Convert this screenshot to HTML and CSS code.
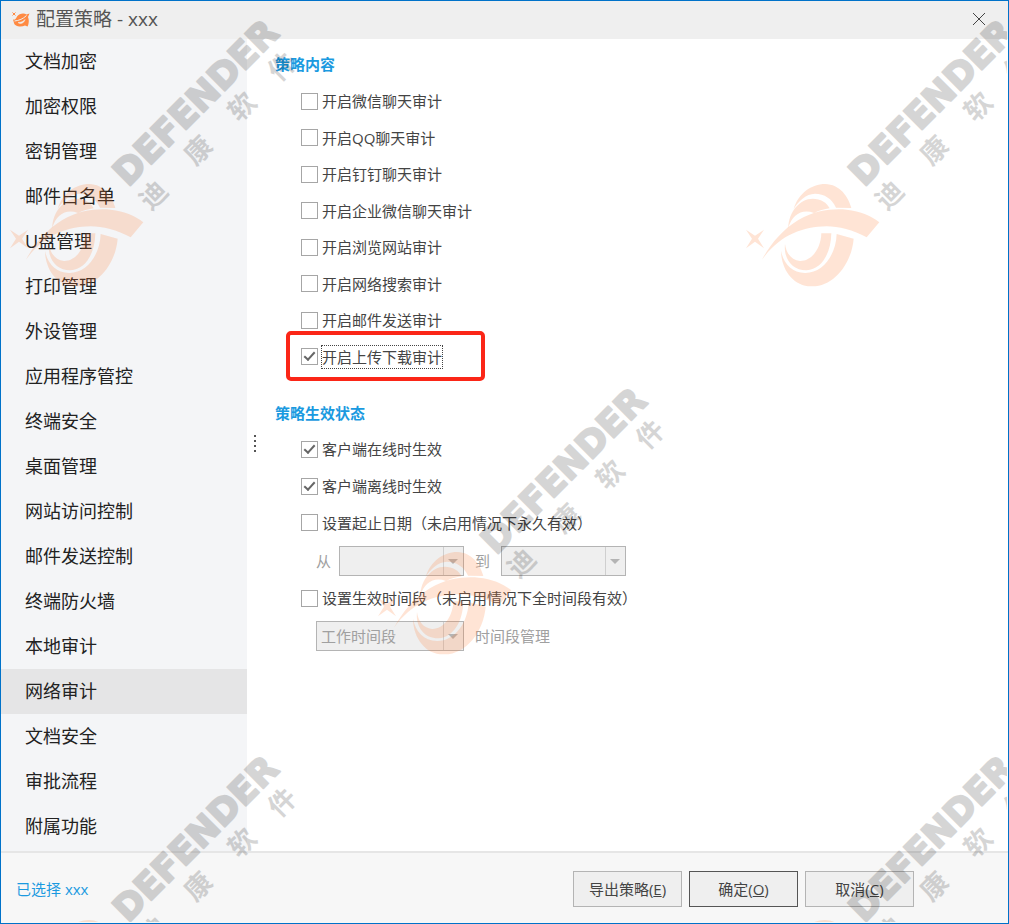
FILE: index.html
```html
<!DOCTYPE html>
<html lang="zh-CN">
<head>
	<meta charset="UTF-8">
	<meta name="viewport" content="width=device-width, initial-scale=1">
	<title>配置策略 - xxx</title>
	<link rel="stylesheet" href="styles.css">
</head>
<body>
<div class="window">
	<header class="titlebar">
		<svg class="app-icon" viewBox="0 0 18 15" aria-hidden="true">
			<path d="M0.500 0.500l3 3M3.500 0.500l-3 3" stroke="#ff8a42" stroke-width="1"/>
			<path d="M5 4.500C7 1.500 12 0.500 14.500 2.500L17.500 1.500L16 5C17.800 9 16 14 15.500 14.500L13 13.500C9 15.500 2.500 14.500 2 11L1 7.500C3 8 4 7 5 4.500Z" fill="#ff8a42"/>
			<path d="M2.500 9C7 8.500 11 7 14.500 3.500" fill="none" stroke="#efefef" stroke-width="1"/>
			<path d="M6 10.500C8 12.500 12 11.500 13 7.500C11.500 9.500 9 10.500 6 10.500Z" fill="#efefef" stroke="#efefef" stroke-width="0.500"/>
		</svg>
		<h1 class="title">配置策略 - xxx</h1>
		<button class="close" type="button" aria-label="关闭">
			<svg viewBox="0 0 14 14"><path d="M1 1l12 12M13 1L1 13"/></svg>
		</button>
	</header>

	<div class="body">
		<nav class="sidebar">
			<a href="#">文档加密</a>
			<a href="#">加密权限</a>
			<a href="#">密钥管理</a>
			<a href="#">邮件白名单</a>
			<a href="#">U盘管理</a>
			<a href="#">打印管理</a>
			<a href="#">外设管理</a>
			<a href="#">应用程序管控</a>
			<a href="#">终端安全</a>
			<a href="#">桌面管理</a>
			<a href="#">网站访问控制</a>
			<a href="#">邮件发送控制</a>
			<a href="#">终端防火墙</a>
			<a href="#">本地审计</a>
			<a href="#" class="active">网络审计</a>
			<a href="#">文档安全</a>
			<a href="#">审批流程</a>
			<a href="#">附属功能</a>
		</nav>
		<div class="splitter"><i></i><i></i><i></i><i></i></div>

		<main class="content">
			<h2>策略内容</h2>
			<ul class="checks audit">
				<li><label><input type="checkbox"><span>开启微信聊天审计</span></label></li>
				<li><label><input type="checkbox"><span>开启QQ聊天审计</span></label></li>
				<li><label><input type="checkbox"><span>开启钉钉聊天审计</span></label></li>
				<li><label><input type="checkbox"><span>开启企业微信聊天审计</span></label></li>
				<li><label><input type="checkbox"><span>开启浏览网站审计</span></label></li>
				<li><label><input type="checkbox"><span>开启网络搜索审计</span></label></li>
				<li><label><input type="checkbox"><span>开启邮件发送审计</span></label></li>
				<li class="marked"><label><input type="checkbox" checked><span>开启上传下载审计</span></label></li>
			</ul>

			<h2>策略生效状态</h2>
			<ul class="checks state">
				<li><label><input type="checkbox" checked><span>客户端在线时生效</span></label></li>
				<li><label><input type="checkbox" checked><span>客户端离线时生效</span></label></li>
				<li><label><input type="checkbox"><span>设置起止日期（未启用情况下永久有效）</span></label></li>
			</ul>
			<div class="range">
				<label for="from">从</label>
				<div class="combo"><select id="from" disabled><option></option></select></div>
				<label class="to" for="to">到</label>
				<div class="combo"><select id="to" disabled><option></option></select></div>
			</div>
			<ul class="checks">
				<li><label><input type="checkbox"><span>设置生效时间段（未启用情况下全时间段有效）</span></label></li>
			</ul>
			<div class="range">
				<div class="combo wide"><select aria-label="时间段" disabled><option>工作时间段</option></select></div>
				<a class="manage" href="#">时间段管理</a>
			</div>
		</main>
	</div>

	<footer class="footer">
		<span class="selected">已选择 xxx</span>
		<button type="button">导出策略(<u>E</u>)</button>
		<button type="button" class="default">确定(<u>O</u>)</button>
		<button type="button">取消(<u>C</u>)</button>
	</footer>

	<svg class="watermark" aria-hidden="true">
		<defs>
			<g id="stamp">
				<g class="logo" transform="translate(-6 0) scale(0.3333)">
					<path d="M48 689L75 707L102 689L84 716L102 745L75 725L48 745L66 716Z"/>
					<path d="M96 779C120 735 155 690 205 660C255 630 310 625 350 629C392 633 425 648 448 667L410 712C370 690 325 679 290 679C215 681 150 705 96 779Z"/>
					<path d="M191 627C205 580 245 552 285 552C330 553 355 590 364 624L318 623C306 596 283 581 255 581C228 582 206 602 191 627Z"/>
					<path d="M175 683C176 635 210 596 248 596C272 596 291 608 299 625C282 628 267 632 252 639C215 626 187 645 175 683Z"/>
					<path d="M153 752C154 812 192 859 243 859C312 862 365 790 371 716L320 702C318 765 278 820 225 819C185 818 160 790 153 752Z"/>
					<path d="M165 732C160 780 190 812 230 811C275 808 303 760 304 700L274 700C273 745 245 784 210 783C182 780 168 757 165 732Z"/>
				</g>
				<g class="brand" transform="translate(130 187) rotate(-45)">
					<text class="en" x="-2" y="-1">DEFENDER</text>
					<text class="cn" x="11" y="32">迪</text>
					<text class="cn" x="74" y="32">康</text>
					<text class="cn" x="136" y="32">软</text>
					<text class="cn" x="193" y="32">件</text>
				</g>
			</g>
		</defs>
		<use href="#stamp"/>
		<use href="#stamp" x="736"/>
		<use href="#stamp" x="368" y="368"/>
		<use href="#stamp" y="736"/>
		<use href="#stamp" x="736" y="736"/>
	</svg>
</div>
</body>
</html>
```
FILE: styles.css
```css
*{margin:0;padding:0;box-sizing:border-box;}
body{font:15px/20px "Open Sans","Noto Sans CJK SC",sans-serif;color:#444;background:#fff;}
ul{list-style:none;}
a{color:inherit;text-decoration:none;}
button,select{font:inherit;color:inherit;}

.window{position:relative;display:flex;flex-direction:column;min-height:100vh;border:1px solid #0072c9;overflow:hidden;}

/* title bar */
.titlebar{display:flex;align-items:center;height:38px;padding:0 22px 2px 11px;background:#efefef;}
.app-icon{width:18px;height:15px;}
.title{flex:1;margin-left:6px;font-size:19px;line-height:24px;font-weight:normal;color:#555;}
.close{width:14px;height:14px;border:0;background:none;}
.close svg{display:block;width:14px;height:14px;fill:none;stroke:#444;}

/* left menu */
.body{flex:1;display:flex;}
.sidebar{width:246px;background:#f4f5f7;}
.sidebar a{display:block;height:45px;padding-left:24px;font-size:18px;line-height:45px;color:#222;}
.sidebar .active{background:#e5e5e6;}
.splitter{display:flex;flex-direction:column;justify-content:center;gap:3px;width:16px;padding:0 0 3px 7px;}
.splitter i{width:2px;height:2px;background:#555;}

/* policy form */
.content{flex:1;padding:15px 12px 0;}
.content h2{font-size:15px;line-height:20px;color:#1b9ae0;}
.checks{padding-left:26px;}
.checks li{flex:1;display:flex;align-items:center;position:relative;min-height:36px;}
.checks label{display:flex;align-items:center;gap:4px;}
.checks input{appearance:none;width:17px;height:17px;border:1px solid #a6a6a6;background:#fff;}
.checks input:checked::before{content:"";display:block;width:9px;height:4px;margin:3px 2px;border:solid #666;border-width:0 0 2px 2px;transform:rotate(-48deg);}
.audit{display:flex;flex-direction:column;height:292px;margin:9px 0 28px;}
.state{display:flex;flex-direction:column;height:110px;margin-top:8px;}
.marked span{outline:1px dotted #444;line-height:22px;}
.marked::after{content:"";position:absolute;left:-15px;top:-8px;width:191px;height:42px;border:4px solid #fb2617;border-radius:5px;}

.range{display:flex;align-items:center;height:39px;padding-left:41px;color:#a0a0a0;}
.range label{margin-right:8px;}
.range .to,.manage{margin-left:11px;}
.range .to{margin-right:11px;}
.combo{position:relative;width:125px;}
.combo.wide{width:148px;}
.combo select{display:block;appearance:none;width:100%;height:30px;padding:0 24px 0 4px;border:1px solid #b4b4b4;border-radius:0;background:linear-gradient(#cfcfcf,#cfcfcf) right 19px top/1px 100% no-repeat #efefef;color:#a0a0a0;opacity:1;}
.combo::after{content:"";position:absolute;right:6px;top:13px;border:solid transparent;border-width:5px 5px 0;border-top-color:#b4b4b4;}

/* bottom bar */
.footer{display:flex;align-items:center;gap:7px;height:72px;padding:1px 94px 0 15px;border-top:2px solid #e6e6e6;background:#f7f7f7;}
.selected{flex:1;color:#1b9ae0;}
.footer button{width:109px;height:36px;border:1px solid #b4b4b4;background:#efefef;}
.footer .default{border-color:#555;}

/* repeated brand stamp */
.watermark{position:absolute;left:-1px;top:-1px;width:100%;height:100%;pointer-events:none;}
.logo{fill:#ff7a2c;fill-opacity:.2;}
.brand{fill:#000;stroke:#000;stroke-linejoin:round;opacity:.16;}
.en{font:bold 36px "DejaVu Sans",sans-serif;stroke-width:2px;}
.cn{font:bold 27px "Noto Sans CJK SC",sans-serif;stroke-width:0;text-anchor:middle;}
```
